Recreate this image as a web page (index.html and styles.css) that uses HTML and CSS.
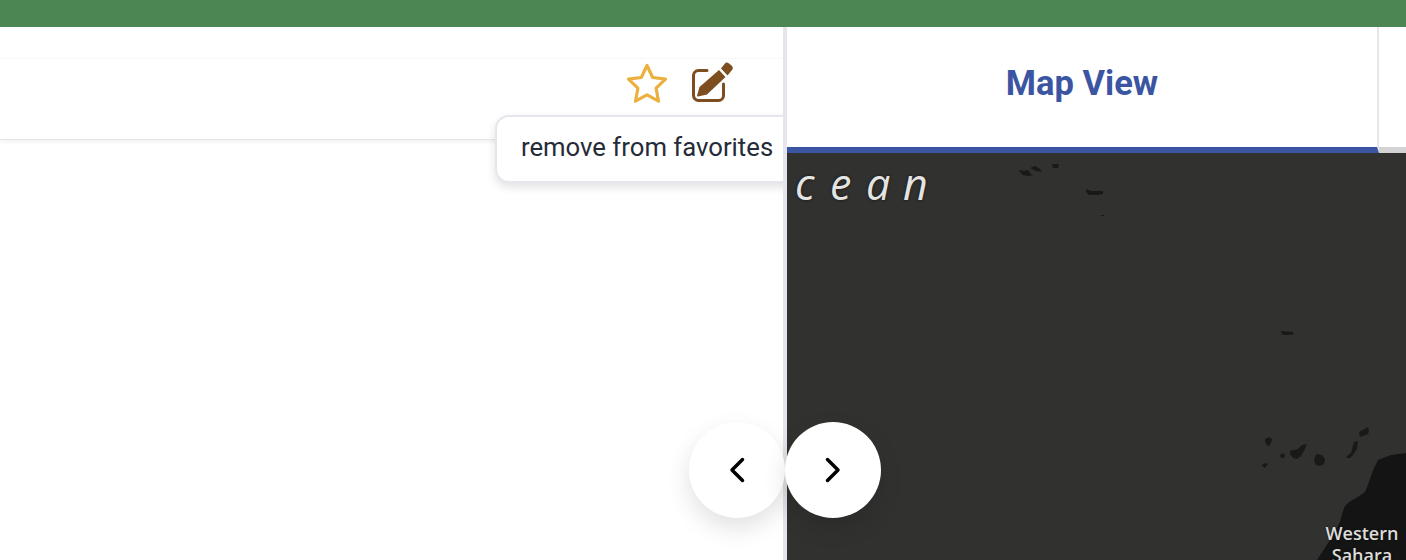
FILE: index.html
```html
<!DOCTYPE html>
<html lang="en">
<head>
<meta charset="utf-8">
<title>Map View</title>
<link rel="stylesheet" href="styles.css">
</head>
<body>
<div class="app">
  <header class="topbar"></header>
  <main class="split">
    <section class="list-pane">
      <div class="card-gap"></div>
      <div class="card">
        <div class="card-actions">
          <svg class="icon-star" width="42" height="42" viewBox="0 0 42 42" aria-hidden="true"><path d="M21 2.500l5.700 12 12.800 1.700-9.400 9 2.400 13L21 31.900 9.500 38.200l2.400-13-9.400-9 12.800-1.700z" fill="none" stroke="#ecb03f" stroke-width="3.200" stroke-linejoin="round"/></svg>
          <svg class="icon-edit" width="44" height="44" viewBox="0 0 44 44" aria-hidden="true">
            <path d="M18 10.500H9.500a5 5 0 0 0-5 5v20a5 5 0 0 0 5 5h20a5 5 0 0 0 5-5V24" fill="none" stroke="#7d4e1f" stroke-width="3" stroke-linecap="round"/>
            <path d="M30 10l6.500 7L18 34.500 9 36.500c-.6.1-1-.3-.9-.9L10.500 27zM32 8.500l3.500-4.500a3.200 3.200 0 0 1 4.500-.5l2.500 2a3.200 3.200 0 0 1 .5 4.500l-4.500 5.500z" fill="#7d4e1f"/>
          </svg>
        </div>
      </div>
      <div class="tooltip">remove from favorites</div>
    </section>
    <div class="divider"></div>
    <section class="map-pane">
      <nav class="tabs">
        <div class="tab tab-active">Map View</div>
        <div class="tab tab-rest"></div>
      </nav>
      <div class="map">
        <svg class="map-art" width="619" height="407" viewBox="0 0 619 407" aria-hidden="true">
          <g fill="#191918">
            <path d="M232 17l5 1 4-1 3 4 3 1-6 1-5-1-4-4zM243 15l5-2 5 3 2 3-6-1zM265 11h7l-1 4h-5zM299 36l5 2h12l0 3-6 1h-8l-3-3zM314 62h3v1h-3zM494 178l6 .5 6 .5 0 2.500-6 .5-5-.5z"/>
            <path d="M478 286l4-2 3 2-1 4-2 3-2-1-2-3zM493 302l3-2 2 2-1 3-3 0zM503 298l8-2 4-4 5-1-3 7-3 5-4 3-4-1-3-4zM530 301l5 1 3 4-1 5-4 2-4-1-2-4 1-5zM572 279l9-5 1 4-1 3-8 3zM567 289l4-1-1 8-4 6-3 3-4 0 2-3 3-2zM476 311l3-1 2 1-3 4-3-2z"/>
            <path d="M619 300l-15 2-13 5-3 6-3 7-3 9-4 10-9 6-7 4-4 4-3 8-2 8-10 18-13 20h89z" fill="#141414"/>
          </g>
        </svg>
        <span class="ocean-label ocean-c">c</span>
        <span class="ocean-label ocean-e">e</span>
        <span class="ocean-label ocean-a">a</span>
        <span class="ocean-label ocean-n">n</span>
        <span class="region-label">Western<br>Sahara</span>
      </div>
    </section>
  </main>
  <button class="nav-btn nav-prev" aria-label="Previous"><svg width="24" height="28" viewBox="0 0 24 28"><path d="M17.500 3.500 7 14l10.500 10.500" fill="none" stroke="#000" stroke-width="3.500" stroke-linecap="round" stroke-linejoin="round"/></svg></button>
  <button class="nav-btn nav-next" aria-label="Next"><svg width="24" height="28" viewBox="0 0 24 28"><path d="M6.500 3.500 17 14 6.500 24.500" fill="none" stroke="#000" stroke-width="3.500" stroke-linecap="round" stroke-linejoin="round"/></svg></button>
</div>
</body>
</html>
```
FILE: styles.css
```css
* { box-sizing: border-box; }
html, body { margin: 0; height: 100%; overflow: hidden; background: #fff; }
body { font-family: Roboto, "Liberation Sans", sans-serif; }
.app { position: relative; width: 1406px; height: 560px; display: flex; flex-direction: column; overflow: hidden; }
.topbar { flex: 0 0 27px; background: #4c8652; }
.split { flex: 1; display: flex; min-height: 0; }
.list-pane { position: relative; flex: 0 0 783px; overflow: hidden; background: #fff; }
.card-gap { height: 31px; }
.card { height: 82px; display: flex; justify-content: flex-end; align-items: flex-start; background: #fff; border-top: 1px solid #f8f8f8; border-bottom: 1px solid #e6e6ea; box-shadow: 0 2px 4px rgba(0, 0, 0, .06); }
.card-actions { display: flex; align-items: flex-start; gap: 21px; padding: 1px 50px 0 0; }
.icon-star { margin-top: 3px; }
.tooltip { position: absolute; left: 495px; top: 88px; width: 320px; height: 68px; padding: 0 0 4px 24px; display: flex; align-items: center; font-size: 25.700px; color: #252c38; background: #fff; border: 2px solid #e6e6ec; border-radius: 14px; box-shadow: 0 4px 10px rgba(0, 0, 0, .12); }
.divider { flex: 0 0 4px; background: #e5e5eb; }
.map-pane { flex: 1; display: flex; flex-direction: column; min-width: 0; }
.tabs { flex: 0 0 126px; display: flex; }
.tab { border-bottom: 6px solid #d3d3d5; }
.tab-active { flex: 0 0 592px; display: flex; align-items: center; justify-content: center; padding-bottom: 9px; font-size: 34.500px; font-weight: 700; color: #3b55a3; border-bottom-color: #3b55a3; border-right: 2px solid #e5e5eb; }
.tab-rest { flex: 1; }
.map { position: relative; flex: 1; overflow: hidden; background: #313130; }
.map-art { position: absolute; left: 0; top: 0; }
.ocean-label { position: absolute; top: 3px; font-family: "Open Sans", sans-serif; font-size: 43px; font-style: italic; line-height: 56px; color: #e4e4e2; text-shadow: 0 0 3px #111; }
.ocean-c { left: 8px; }
.ocean-e { left: 43px; }
.ocean-a { left: 79px; }
.ocean-n { left: 116px; }
.region-label { position: absolute; left: 535px; top: 369px; width: 80px; text-align: center; font-family: "Open Sans", sans-serif; font-size: 18px; font-weight: 600; line-height: 22px; color: #dcdcda; text-shadow: 0 0 2px #111; }
.nav-btn { position: absolute; top: 422px; width: 96px; height: 96px; padding: 0; display: flex; align-items: center; justify-content: center; background: #fff; border: 0; border-radius: 50%; box-shadow: 0 10px 24px rgba(0, 0, 0, .12); }
.nav-prev { left: 689px; }
.nav-next { left: 785px; }
```
